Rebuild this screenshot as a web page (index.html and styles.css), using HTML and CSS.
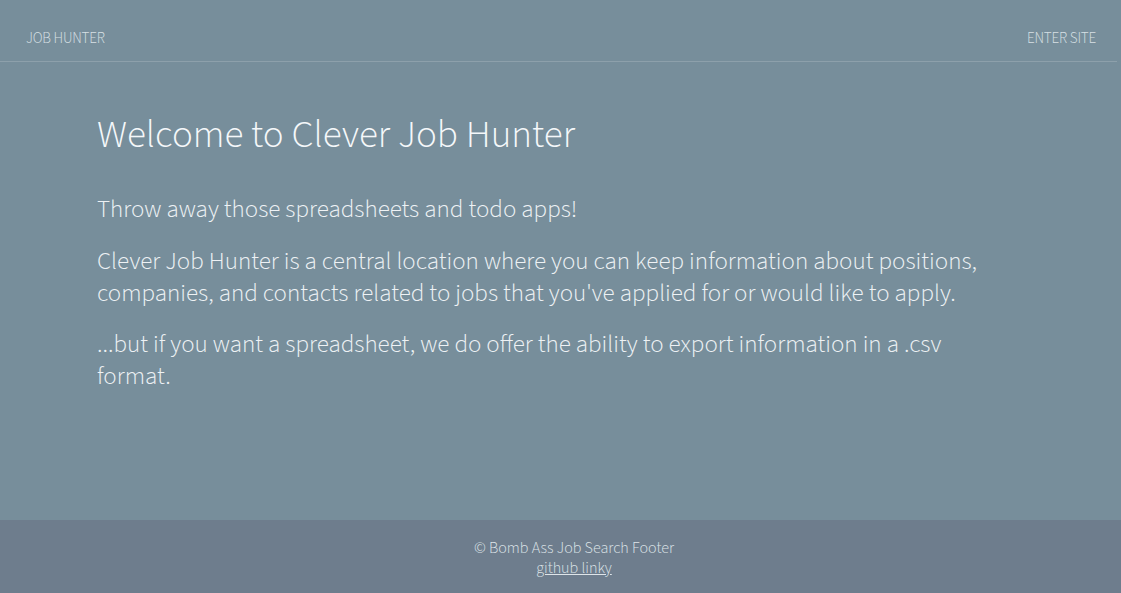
FILE: index.html
```html
<!DOCTYPE html>
<html lang="en">
<head>
<meta charset="utf-8">
<title>Clever Job Hunter</title>
<link rel="stylesheet" href="styles.css">
</head>
<body>
<div class="page">
  <header class="topbar">
    <a class="brand" href="#">JOB HUNTER</a>
    <a class="enter" href="#">ENTER SITE</a>
  </header>
  <main class="content">
    <h1 class="title">Welcome to Clever Job Hunter</h1>
    <p class="lead">Throw away those spreadsheets and todo apps!</p>
    <p class="lead">Clever Job Hunter is a central location where you can keep information about positions, companies, and contacts related to jobs that you've applied for or would like to apply.</p>
    <p class="lead">...but if you want a spreadsheet, we do offer the ability to export information in a .csv format.</p>
  </main>
  <footer class="footer">
    <div class="copy">© Bomb Ass Job Search Footer</div>
    <a class="gh" href="#">github linky</a>
  </footer>
</div>
</body>
</html>
```
FILE: styles.css
```css
html, body {
  margin: 0;
  padding: 0;
  height: 100%;
}
body {
  background: #778e9b;
  font-family: "Source Sans Pro", "Source Sans 3", "Open Sans", sans-serif;
  font-weight: 300;
  color: #f3f6f8;
}
.page {
  min-height: 100vh;
  display: flex;
  flex-direction: column;
}
.topbar {
  display: flex;
  justify-content: space-between;
  align-items: center;
  height: 62px;
  padding: 16px 21px 0 26px;
  margin-right: 4px;
  border-bottom: 1px solid #8da0ab;
  box-sizing: border-box;
}
.brand, .enter {
  color: #d8e0e5;
  text-decoration: none;
  font-size: 15px;
  font-weight: 300;
  letter-spacing: -0.2px;
}
.content {
  flex: 1;
  padding: 48px 97px 0 97px;
  max-width: 910px;
}
.title {
  font-size: 39px;
  font-weight: 300;
  margin: 0 0 33px;
  line-height: 50px;
  color: #f5f8fa;
}
.lead {
  font-size: 25px;
  line-height: 32px;
  margin: 0 0 19.5px;
  color: #eef2f5;
}
.footer {
  background: #6e7d8d;
  height: 73px;
  display: flex;
  flex-direction: column;
  align-items: center;
  justify-content: center;
  font-size: 16px;
  line-height: 20px;
  color: #dfe5e9;
  padding: 2px 0 0 27px;
  box-sizing: border-box;
}
.gh {
  color: #dfe5e9;
  text-decoration: underline;
}
```
